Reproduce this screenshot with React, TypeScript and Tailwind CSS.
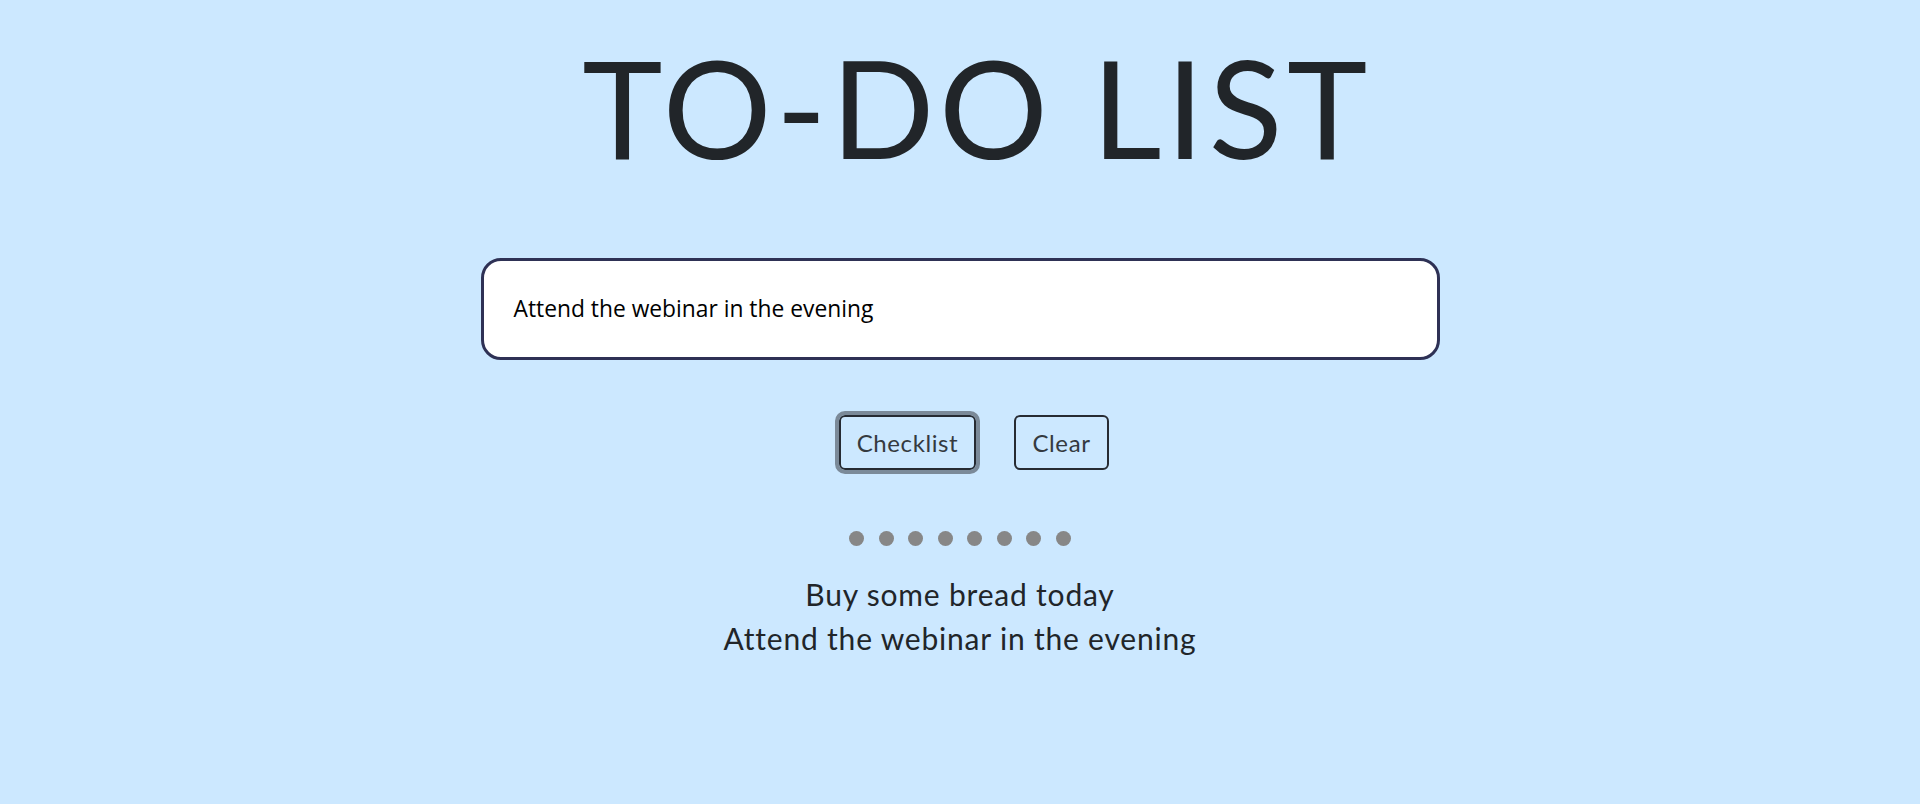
import React from "react";

const tasks = ["Buy some bread today", "Attend the webinar in the evening"];

export default function App() {
    return (
        <div className="flex min-h-[804px] w-full flex-col items-center bg-[#cce8ff] font-['Lato',sans-serif] text-[#212529]">
            <h1 className="mt-[39px] ml-[34px] text-[136px] leading-none font-normal tracking-[4.5px]">TO-DO LIST</h1>

            <div className="mt-[83px] flex h-[102px] w-[959px] items-center rounded-[20px] border-[3px] border-[#2e3155] bg-white px-[30px]">
                <span className="font-['Open_Sans',sans-serif] text-[22.8px] text-black">Attend the webinar in the evening</span>
            </div>

            <div className="mt-[55px] ml-[28px] flex items-center gap-[38px]">
                <button className="h-[55px] w-[137px] rounded-[6px] border-2 border-[#262b33] text-[24px] tracking-[0.6px] text-[#343a40] outline-[4px] outline-[#7b8a99] outline-offset-0">
                    Checklist
                </button>
                <button className="h-[55px] w-[95px] rounded-[6px] border-2 border-[#262b33] text-[24px] tracking-[0.6px] text-[#343a40]">Clear</button>
            </div>

            <div className="mt-[61px] flex gap-[14.6px]">
                {Array.from({ length: 8 }, (_, i) => (
                    <div key={i} className="h-[15px] w-[15px] rounded-full bg-[#878787]" />
                ))}
            </div>

            <div className="mt-[26px] flex flex-col items-center text-[30px] leading-[44px] tracking-[0.8px]">
                {tasks.map((t) => (
                    <p key={t}>{t}</p>
                ))}
            </div>
        </div>
    );
}
